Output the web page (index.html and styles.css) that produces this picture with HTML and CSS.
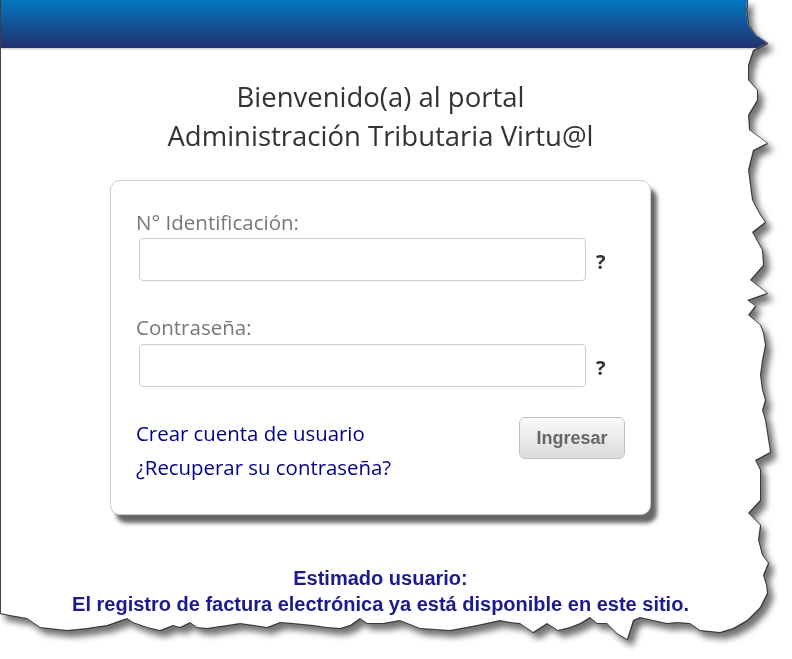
FILE: index.html
```html
<!DOCTYPE html>
<html>
<head>
   <meta charset="UTF-8">
   <title>Administración Tributaria Virtu@l</title>
   <link rel="stylesheet" href="styles.css">
</head>
<body>
   <div class="sheet">
      <div class="paper">
         <div class="header"></div>
         <div class="content">
            <h1>Bienvenido(a) al portal<br>Administración Tributaria Virtu@l</h1>

            <div class="login-box">
               <label for="identificacion">N° Identificación:</label>
               <div class="field-row">
                  <input type="text" id="identificacion">
                  <span class="help">?</span>
               </div>

               <label for="clave" class="second">Contraseña:</label>
               <div class="field-row">
                  <input type="password" id="clave">
                  <span class="help">?</span>
               </div>

               <div class="actions">
                  <div class="links">
                     <a href="#">Crear cuenta de usuario</a>
                     <a href="#">¿Recuperar su contraseña?</a>
                  </div>
                  <button type="button">Ingresar</button>
               </div>
            </div>

            <div class="notice">
               Estimado usuario:<br>
               El registro de factura electrónica ya está disponible en este sitio.
            </div>
         </div>
      </div>
   </div>
</body>
</html>
```

FILE: styles.css
```css
      html, body {
         margin: 0;
         height: 659px;
         overflow: hidden;
         background-color: #fff;
      }
      /* borde rasgado: contorno oscuro + sombra */
      .sheet {
         height: 659px;
         filter: drop-shadow(1px 0 0 #3a3a3a) drop-shadow(0 1px 0 #3a3a3a) drop-shadow(5px 6px 3px rgba(0, 0, 0, 0.55));
      }
      .paper {
         height: 659px;
         background-color: #fff;
         border-left: 1px solid #444;
         clip-path: polygon(0 0, 747px 0, 746px 10px, 748px 25px, 755px 35px, 767px 43px, 753px 50px, 748px 65px, 748px 80px, 757px 90px, 757px 100px, 748px 115px, 749px 130px, 767px 143px, 753px 150px, 748px 170px, 750px 185px, 752px 200px, 760px 215px, 765px 222px, 752px 232px, 762px 250px, 763px 265px, 750px 280px, 767px 293px, 747px 300px, 755px 306px, 748px 315px, 760px 325px, 763px 333px, 765px 345px, 762px 360px, 760px 375px, 762px 390px, 765px 400px, 762px 410px, 765px 420px, 770px 452px, 755px 460px, 760px 470px, 760px 485px, 760px 500px, 748px 513px, 760px 525px, 758px 540px, 762px 555px, 768px 563px, 763px 575px, 766px 585px, 767px 593px, 760px 607px, 747px 620px, 733px 628px, 720px 632px, 700px 630px, 690px 623px, 677px 622px, 667px 623px, 653px 620px, 640px 617px, 633px 620px, 627px 639px, 617px 633px, 607px 623px, 597px 623px, 590px 617px, 580px 623px, 570px 627px, 558px 630px, 547px 623px, 533px 632px, 520px 623px, 510px 622px, 500px 620px, 477px 625px, 450px 630px, 420px 628px, 400px 620px, 383px 623px, 367px 623px, 360px 618px, 350px 625px, 340px 628px, 327px 627px, 313px 625px, 293px 623px, 280px 622px, 267px 627px, 240px 623px, 227px 625px, 207px 628px, 197px 627px, 190px 622px, 180px 627px, 173px 625px, 160px 630px, 147px 627px, 133px 622px, 127px 618px, 107px 625px, 87px 628px, 67px 630px, 40px 627px, 27px 618px, 10px 615px, 0 613px);
      }
      .header {
         height: 48px;
         background: linear-gradient(#0277bf, #22306f);
         box-shadow: 0 1px 2px rgba(0, 0, 0, 0.25);
      }
      .content {
         width: 759px;
         text-align: center;
      }
      h1 {
         margin: 29px 0 0;
         font-family: "Open Sans", sans-serif;
         font-size: 27.5px;
         font-weight: normal;
         line-height: 39px;
         color: #333;
      }
      .login-box {
         box-sizing: border-box;
         width: 541px;
         margin: 25px auto 0;
         padding: 29px 25px 30px;
         border: 1px solid #ccc;
         border-radius: 10px;
         box-shadow: 6px 8px 4px #666;
         background-color: #fff;
         text-align: left;
         font-family: "Open Sans", sans-serif;
      }
      label {
         display: block;
         font-size: 20.5px;
         line-height: 24px;
         color: #777;
         margin-bottom: 4px;
      }
      label.second {
         margin-top: 34px;
         margin-bottom: 5px;
      }
      .field-row {
         display: flex;
         align-items: center;
         gap: 10px;
         margin-left: 3px;
      }
      input[type="text"], input[type="password"] {
         box-sizing: border-box;
         width: 447px;
         height: 43px;
         margin: 0;
         border: 1px solid #ccc;
         border-radius: 4px;
         background-color: #fff;
      }
      .help {
         font-size: 20px;
         font-weight: bold;
         color: #333;
         padding-top: 4px;
      }
      .actions {
         display: flex;
         justify-content: space-between;
         align-items: flex-start;
         margin-top: 29px;
      }
      .links {
         display: flex;
         flex-direction: column;
      }
      .links a {
         font-size: 20.4px;
         line-height: 34px;
         color: #00008b;
         text-decoration: none;
      }
      button {
         width: 106px;
         height: 42px;
         margin-top: 1px;
         background: linear-gradient(#fbfbfb, #dadada);
         border: 1px solid #c2c2c2;
         border-radius: 6px;
         font-family: "Liberation Sans", Arial, sans-serif;
         font-size: 18px;
         font-weight: bold;
         color: #666;
         cursor: pointer;
      }
      .notice {
         margin-top: 50px;
         font-family: "Liberation Sans", Arial, sans-serif;
         font-size: 20px;
         font-weight: bold;
         line-height: 26px;
         color: #1c1a8c;
      }
```
